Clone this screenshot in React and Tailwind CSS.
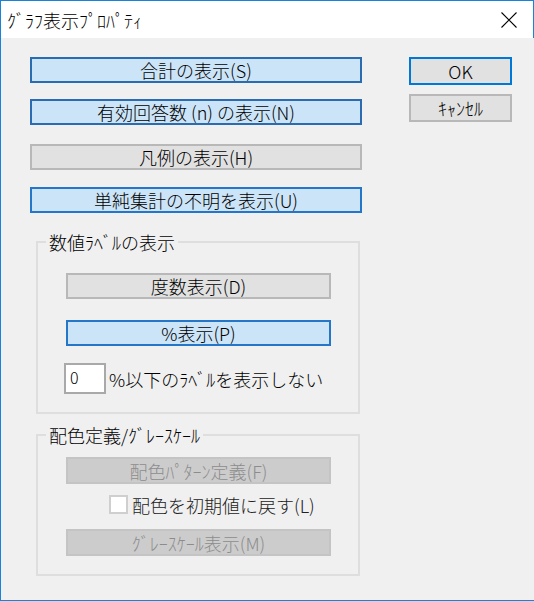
export default function App() {
  const font = "font-['Noto_Sans_CJK_JP',sans-serif]";
  const btnBase = "flex items-center justify-center border-2 leading-none whitespace-nowrap";
  return (
    <div className={`w-[534px] h-[601px] bg-[#f0f0f0] border-l border-t border-b border-[#1883d7] flex flex-col ${font} font-light text-[18px] text-black`}>
      <div className="h-[37px] bg-white border-r border-[#1883d7] flex items-center justify-between pl-[6px] pr-[16px]">
        <span className="leading-none">ｸﾞﾗﾌ表示ﾌﾟﾛﾊﾟﾃｨ</span>
        <svg width="16" height="16" viewBox="0 0 16 16" className="mt-[1px]">
          <path d="M0.5 0.5L15.5 15.5M15.5 0.5L0.5 15.5" stroke="#000" strokeWidth="1.1" fill="none" />
        </svg>
      </div>
      <div className="flex flex-1 pt-[19px] pl-[29px]">
        <div className="w-[332px] flex flex-col">
          <div className={`${btnBase} h-[26px] bg-[#cce4f7] border-[#2b6cb0]`}>合計の表示(S)</div>
          <div className={`${btnBase} h-[26px] mt-[16px] bg-[#cce4f7] border-[#2b6cb0]`}>有効回答数 (n) の表示(N)</div>
          <div className={`${btnBase} h-[26px] mt-[19px] bg-[#e1e1e1] border-[#b8b8b8]`}>凡例の表示(H)</div>
          <div className={`${btnBase} h-[26px] mt-[17px] bg-[#cce4f7] border-[#2476c8]`}>単純集計の不明を表示(U)</div>

          <fieldset className="mt-[19px] ml-[6px] w-[324px] border-2 border-[#dedede]">
            <legend className="ml-[8px] px-[3px] leading-[20px]">数値ﾗﾍﾞﾙの表示</legend>
            <div className="flex flex-col pt-[21px] pl-[28px] pb-[18px]">
              <div className={`${btnBase} w-[265px] h-[26px] bg-[#e1e1e1] border-[#b8b8b8]`}>度数表示(D)</div>
              <div className={`${btnBase} w-[265px] h-[26px] mt-[21px] bg-[#cce4f7] border-[#2476c8]`}>%表示(P)</div>
              <div className="flex items-center mt-[17px] h-[31px] -ml-[2px]">
                <div className="w-[42px] h-[31px] bg-white border-2 border-[#a9a9a9] pl-[4px] pt-[2px] text-[16px] leading-[20px]">0</div>
                <span className="ml-[3px] leading-none whitespace-nowrap">%以下のﾗﾍﾞﾙを表示しない</span>
              </div>
            </div>
          </fieldset>

          <fieldset className="mt-[11px] ml-[6px] w-[324px] border-2 border-[#dedede]">
            <legend className="ml-[8px] px-[3px] leading-[20px]">配色定義/ｸﾞﾚｰｽｹｰﾙ</legend>
            <div className="flex flex-col pt-[12px] pl-[28px] pb-[18px]">
              <div className={`${btnBase} w-[265px] h-[27px] bg-[#cccccc] border-[#c4c4c4] text-[#8c8c8c]`}>配色ﾊﾟﾀｰﾝ定義(F)</div>
              <div className="flex items-center mt-[11px] h-[19px] pl-[43px]">
                <div className="w-[19px] h-[19px] bg-white border-2 border-[#cfcfcf]"></div>
                <span className="ml-[4px] leading-none whitespace-nowrap text-[#222]">配色を初期値に戻す(L)</span>
              </div>
              <div className={`${btnBase} w-[265px] h-[27px] mt-[15px] bg-[#cccccc] border-[#c4c4c4] text-[#8c8c8c]`}>ｸﾞﾚｰｽｹｰﾙ表示(M)</div>
            </div>
          </fieldset>
        </div>

        <div className="ml-[47px] w-[103px] flex flex-col">
          <div className={`${btnBase} h-[28px] bg-[#e1e1e1] border-[#0078d7]`}>OK</div>
          <div className={`${btnBase} h-[28px] mt-[9px] bg-[#e1e1e1] border-[#b8b8b8]`}>ｷｬﾝｾﾙ</div>
        </div>
      </div>
    </div>
  );
}
